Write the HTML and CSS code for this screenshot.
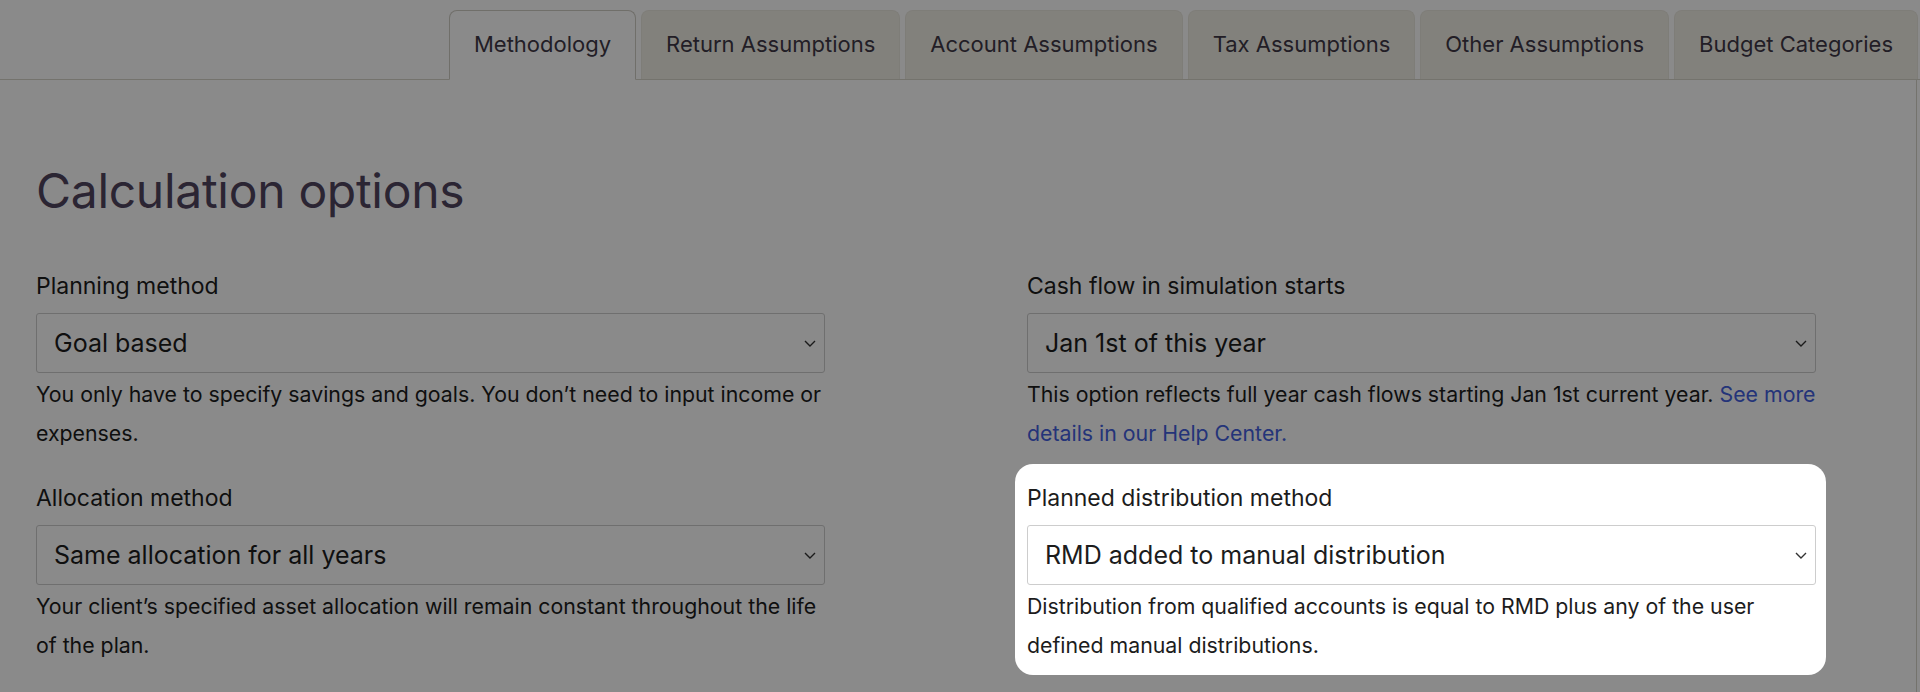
FILE: index.html
```html
<!DOCTYPE html>
<html lang="en">
<head>
  <meta charset="UTF-8" />
  <meta name="viewport" content="width=device-width, initial-scale=1.0" />
  <title>Calculation options</title>
  <link rel="stylesheet" href="styles.css">
</head>
<body>
  <div class="settings">
    <ul class="tabs">
      <li class="tab active">Methodology</li>
      <li class="tab">Return Assumptions</li>
      <li class="tab">Account Assumptions</li>
      <li class="tab">Tax Assumptions</li>
      <li class="tab">Other Assumptions</li>
      <li class="tab">Budget Categories</li>
    </ul>

    <div class="panel">
      <h1>Calculation options</h1>

      <div class="fields">
        <div class="field">
          <label>Planning method</label>
          <div class="select">
            <span>Goal based</span>
            <svg class="chevron" width="12" height="7" viewBox="0 0 12 7"><path d="M1 1l5 5 5-5" fill="none" stroke="currentColor" stroke-width="1.4"/></svg>
          </div>
          <p class="help">You only have to specify savings and goals. You don’t need to input income or expenses.</p>
        </div>

        <div class="field">
          <label>Cash flow in simulation starts</label>
          <div class="select">
            <span>Jan 1st of this year</span>
            <svg class="chevron" width="12" height="7" viewBox="0 0 12 7"><path d="M1 1l5 5 5-5" fill="none" stroke="currentColor" stroke-width="1.4"/></svg>
          </div>
          <p class="help">This option reflects full year cash flows starting Jan 1st current year. <a href="#">See more details in our Help Center.</a></p>
        </div>

        <div class="field">
          <label>Allocation method</label>
          <div class="select">
            <span>Same allocation for all years</span>
            <svg class="chevron" width="12" height="7" viewBox="0 0 12 7"><path d="M1 1l5 5 5-5" fill="none" stroke="currentColor" stroke-width="1.4"/></svg>
          </div>
          <p class="help">Your client’s specified asset allocation will remain constant throughout the life of the plan.</p>
        </div>

        <!-- tour step: highlighted -->
        <div class="field spotlight">
          <label>Planned distribution method</label>
          <div class="select">
            <span>RMD added to manual distribution</span>
            <svg class="chevron" width="12" height="7" viewBox="0 0 12 7"><path d="M1 1l5 5 5-5" fill="none" stroke="currentColor" stroke-width="1.4"/></svg>
          </div>
          <p class="help">Distribution from qualified accounts is equal to RMD plus any of the user defined manual distributions.</p>
        </div>
      </div>
    </div>
  </div>
</body>
</html>
```

FILE: styles.css
```css
body {
  margin: 0;
  font-family: Inter, 'Noto Sans', sans-serif;
  color: #1c1c1c;
  background: #fff;
  overflow: hidden;
}

.settings {
  min-height: 100vh;
  display: flex;
  flex-direction: column;
}

.tabs {
  list-style: none;
  margin: 0;
  padding: 10px 2px 0 0;
  display: flex;
  justify-content: flex-end;
  gap: 5px;
  border-bottom: 1px solid #d6d4ca;
}

.tab {
  height: 69px;
  box-sizing: border-box;
  display: flex;
  align-items: center;
  padding: 0 24px 2px;
  font-size: 22px;
  color: #3f3947;
  background: #f1efe6;
  border: 1px solid #e9e7de;
  border-bottom: none;
  border-radius: 8px 8px 0 0;
}

.tab.active {
  height: 70px;
  margin-bottom: -1px;
  background: #fff;
  border: 1px solid #cfcdc4;
  border-bottom: 1px solid #fff;
}

.panel {
  flex: 1;
  margin-right: 3px;
  padding-left: 36px;
  border-right: 1px solid #d6d4ca;
}

h1 {
  margin: 82px 0 51px;
  font-size: 48px;
  line-height: 58px;
  font-weight: 400;
  color: #51455f;
  letter-spacing: -0.3px;
}

.fields {
  display: grid;
  grid-template-columns: 789px 789px;
  column-gap: 202px;
  row-gap: 30px;
}

.field label {
  display: block;
  font-size: 23px;
  line-height: 30px;
  margin-bottom: 12px;
  color: #1c1c1c;
}

.select {
  height: 60px;
  box-sizing: border-box;
  display: flex;
  align-items: center;
  justify-content: space-between;
  padding: 0 8px 0 17px;
  border: 1px solid #cdcdcd;
  border-radius: 3px;
  background: #fff;
  font-size: 25px;
}

.chevron {
  color: #333;
}

.help {
  margin: 2px 0 0;
  font-size: 21.3px;
  line-height: 39px;
}

.help a {
  color: #4460e0;
  text-decoration: none;
}

.spotlight {
  position: relative;
  z-index: 10;
  margin: -19px -10px -10px -12px;
  padding: 19px 10px 10px 12px;
  background: #fff;
  border-radius: 18px;
  box-shadow: 0 0 0 4000px rgba(0, 0, 0, 0.46);
}
```
